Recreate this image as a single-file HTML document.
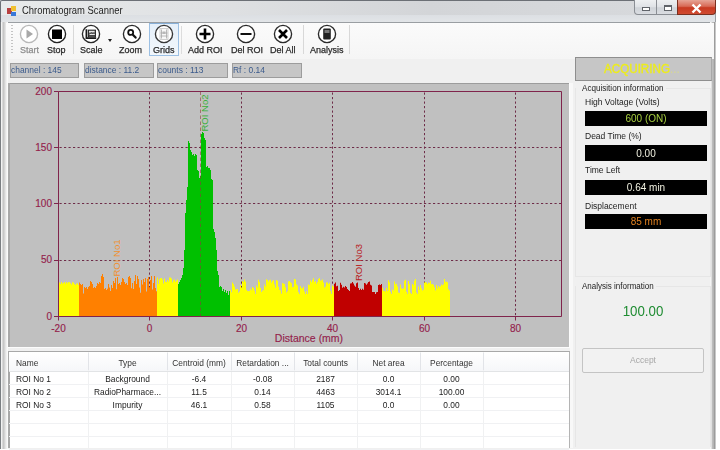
<!DOCTYPE html>
<html><head><meta charset="utf-8"><style>
*{margin:0;padding:0;box-sizing:border-box}
html,body{width:720px;height:450px;overflow:hidden;background:#fff}
#w{position:absolute;left:0;top:0;width:720px;height:450px;filter:blur(0.35px)}
body{position:relative;font-family:"Liberation Sans",sans-serif;color:#222}
.abs{position:absolute}
.t{position:absolute;white-space:nowrap;line-height:1}
</style></head><body><div id="w">
<!-- window frame -->
<div class="abs" style="left:0;top:0;width:716px;height:449px;background:linear-gradient(90deg,#e8eaeb 0%,#dfe1e3 30%,#d3d5d8 60%,#d8dadd 100%);border:1px solid #6c7076;border-bottom:none;border-right-color:#9a9ea2;border-radius:2px 2px 0 0"></div>
<div class="abs" style="left:716px;top:0;width:4px;height:450px;background:#fff"></div>
<div class="abs" style="left:1px;top:15px;width:714px;height:7px;background:linear-gradient(180deg,#dcdfe3,#e2e5e8)"></div>
<!-- icon -->
<div class="abs" style="left:7px;top:8px;width:5px;height:6px;background:#b84040"></div>
<div class="abs" style="left:11px;top:6px;width:5px;height:5px;background:#f0c030"></div>
<div class="abs" style="left:11px;top:12px;width:5px;height:4px;background:#3a78d8"></div>
<div class="t" style="left:22px;top:5.3px;font-size:10.6px;color:#1e1e1e;transform:scaleX(0.89);transform-origin:0 0">Chromatogram Scanner</div>
<!-- caption buttons -->
<div class="abs" style="left:634px;top:0;width:44px;height:15px;border:1px solid #8a8e94;border-top:none;border-radius:0 0 0 4px;background:linear-gradient(180deg,#eef0f2,#dfe2e6 50%,#cfd3d8 55%,#dadde2)"></div>
<div class="abs" style="left:656px;top:0;width:1px;height:14px;background:#8a8e94"></div>
<div class="abs" style="left:642px;top:7px;width:8px;height:4px;background:#fff;border:1px solid #60646a"></div>
<div class="abs" style="left:664px;top:5px;width:8px;height:6px;background:#fff;border:1px solid #60646a;border-top-width:2px"></div>
<div class="abs" style="left:677px;top:0;width:39px;height:15px;border:1px solid #7a3020;border-top:none;border-radius:0 0 4px 0;background:linear-gradient(180deg,#e6a496,#d86a56 45%,#c83a22 55%,#d04a30)"></div>
<svg class="abs" style="left:691px;top:3px" width="11" height="11" viewBox="0 0 11 11"><path d="M1.5 1.5L9.5 9.5M9.5 1.5L1.5 9.5" stroke="#fff" stroke-width="2.4"/></svg>
<!-- client -->
<div class="abs" style="left:5px;top:22px;width:710px;height:427px;background:#f0f0f0;border-top:1px solid #9a9ea2"></div>
<div class="abs" style="left:0;top:22px;width:8px;height:427px;background:linear-gradient(90deg,#7a7e82 0 1px,#f2f2f2 1px 2px,#d8d8d8 2px 3px,#c6c6c6 3px 4px,#d4d4d4 4px 5px,#e4e4e4 5px 6px,#f0f0f0 6px 7px,#fafafa 7px 8px)"></div>
<div class="abs" style="left:710px;top:22px;width:6px;height:427px;background:linear-gradient(90deg,#f4f4f4 0 1px,#e0e0e0 1px 2px,#bcbcbc 2px 3px,#b4b4b4 3px 4px,#9c9c9c 4px 5px,#c8c8c8 5px 6px)"></div><div class="abs" style="left:0;top:449px;width:720px;height:1px;background:#fff"></div>
<!-- toolbar -->
<div class="abs" style="left:6px;top:23px;width:708px;height:36px;background:linear-gradient(180deg,#fbfbfb,#f5f5f5)"></div>
<div class="abs" style="left:11px;top:25px;width:2px;height:28px;background:repeating-linear-gradient(180deg,#c4c4c4 0 1px,transparent 1px 3px)"></div>
<div class="abs" style="left:73px;top:25px;width:1px;height:29px;background:#d8d8d8"></div>
<div class="abs" style="left:181px;top:26px;width:1px;height:28px;background:#dcdcdc"></div>
<div class="abs" style="left:303px;top:25px;width:1px;height:29px;background:#d8d8d8"></div>
<div class="abs" style="left:349px;top:25px;width:1px;height:29px;background:#d8d8d8"></div>
<div class="abs" style="left:149px;top:23px;width:30px;height:33px;background:linear-gradient(180deg,#e6f0fa,#f2f7fc);border:1px solid #9cc0e4;border-top-color:#88b0d8"></div>
<svg class="abs" style="left:18px;top:23px" width="22" height="22" viewBox="-11 -11 22 22">
<circle r="8.6" fill="#fff" stroke="#b8b8b8" stroke-width="1.35"/><path d="M-2.5 -4.5L4 0L-2.5 4.5Z" fill="#a8a8a8"/></svg><svg class="abs" style="left:46px;top:23px" width="22" height="22" viewBox="-11 -11 22 22">
<circle r="8.6" fill="#fff" stroke="#222" stroke-width="1.35"/><rect x="-5" y="-4.5" width="10" height="9.5" fill="#000"/></svg><svg class="abs" style="left:79.5px;top:23px" width="22" height="22" viewBox="-11 -11 22 22">
<circle r="8.6" fill="#fff" stroke="#2a2a2a" stroke-width="1.35"/><path d="M-4.6 -4.8V4.2H5.2" fill="none" stroke="#1a1a1a" stroke-width="1.7"/><rect x="-2.6" y="-3.8" width="7" height="6.6" fill="#e8e8e8" stroke="#222" stroke-width="1.1"/><path d="M-2.2 -0.8H4M-2.2 1.6H4" stroke="#333" stroke-width="1"/><path d="M-2 0.5L0.5 -1.5L2 -0.5L4 -2.5" fill="none" stroke="#444" stroke-width="0.9"/></svg><svg class="abs" style="left:120.5px;top:23.200000000000003px" width="22" height="22" viewBox="-11 -11 22 22">
<circle r="8.6" fill="#fff" stroke="#2a2a2a" stroke-width="1.35"/><circle cx="-1.3" cy="-1.6" r="2.5" fill="none" stroke="#111" stroke-width="1.8"/><path d="M0.6 0.5L3.6 3.6" stroke="#111" stroke-width="2.2" stroke-linecap="round"/></svg><svg class="abs" style="left:152.5px;top:23.200000000000003px" width="22" height="22" viewBox="-11 -11 22 22">
<circle r="8.6" fill="#fff" stroke="#383838" stroke-width="1.35"/><rect x="-4" y="-5.5" width="8" height="11" fill="#f8f8f8" stroke="#c4c4c4" stroke-width="0.8"/><path d="M-2.5 -4.5V4.5M2.5 -4.5V4.5M-3.5 -1H3.5M-3.5 2H3.5" stroke="#a8a8a8" stroke-width="0.8" fill="none"/><rect x="-1.5" y="-2.5" width="3" height="2.5" fill="#b8b8b8"/></svg><svg class="abs" style="left:193.5px;top:23.299999999999997px" width="22" height="22" viewBox="-11 -11 22 22">
<circle r="8.6" fill="#fff" stroke="#2a2a2a" stroke-width="1.35"/><path d="M-5.5 0H5.5M0 -5.5V5.5" stroke="#000" stroke-width="2.6"/></svg><svg class="abs" style="left:235.3px;top:23.299999999999997px" width="22" height="22" viewBox="-11 -11 22 22">
<circle r="8.6" fill="#fff" stroke="#2a2a2a" stroke-width="1.35"/><path d="M-5.5 0H5.5" stroke="#111" stroke-width="2"/></svg><svg class="abs" style="left:272.4px;top:23.299999999999997px" width="22" height="22" viewBox="-11 -11 22 22">
<circle r="8.6" fill="#fff" stroke="#2a2a2a" stroke-width="1.35"/><path d="M-4 -4L4 4M4 -4L-4 4" stroke="#000" stroke-width="2.6"/></svg><svg class="abs" style="left:316.3px;top:23.299999999999997px" width="22" height="22" viewBox="-11 -11 22 22">
<circle r="8.6" fill="#fff" stroke="#2a2a2a" stroke-width="1.35"/><rect x="-3.8" y="-5.5" width="7.6" height="11" rx="1" fill="#222"/><rect x="-2.5" y="-4" width="5" height="3" fill="#777"/></svg>
<div class="abs" style="left:108px;top:39px;width:0;height:0;border-left:2.5px solid transparent;border-right:2.5px solid transparent;border-top:3px solid #222"></div>
<div class="t" style="left:20px;top:45.8px;font-size:9px;color:#8c8c8c;-webkit-text-stroke:0.25px #8c8c8c">Start</div>
<div class="t" style="left:47px;top:45.8px;font-size:9px;color:#2a2a2a;-webkit-text-stroke:0.25px #2a2a2a">Stop</div>
<div class="t" style="left:80px;top:45.8px;font-size:9px;color:#2a2a2a;-webkit-text-stroke:0.25px #2a2a2a">Scale</div>
<div class="t" style="left:119px;top:45.8px;font-size:9px;color:#2a2a2a;-webkit-text-stroke:0.25px #2a2a2a">Zoom</div>
<div class="t" style="left:153px;top:45.8px;font-size:9px;color:#2a2a2a;-webkit-text-stroke:0.25px #2a2a2a">Grids</div>
<div class="t" style="left:188px;top:45.8px;font-size:9px;color:#2a2a2a;-webkit-text-stroke:0.25px #2a2a2a">Add ROI</div>
<div class="t" style="left:231px;top:45.8px;font-size:9px;color:#2a2a2a;-webkit-text-stroke:0.25px #2a2a2a">Del ROI</div>
<div class="t" style="left:270px;top:45.8px;font-size:9px;color:#2a2a2a;-webkit-text-stroke:0.25px #2a2a2a">Del All</div>
<div class="t" style="left:310px;top:45.8px;font-size:9px;color:#2a2a2a;-webkit-text-stroke:0.25px #2a2a2a">Analysis</div>
<!-- status labels -->
<div class="abs" style="left:10px;top:63px;width:69px;height:15px;background:#c6c6c6;border:1px solid #9c9c9c"></div>
<div class="abs" style="left:84px;top:63px;width:70px;height:15px;background:#c6c6c6;border:1px solid #9c9c9c"></div>
<div class="abs" style="left:157px;top:63px;width:71px;height:15px;background:#c6c6c6;border:1px solid #9c9c9c"></div>
<div class="abs" style="left:232px;top:63px;width:70px;height:15px;background:#c6c6c6;border:1px solid #9c9c9c"></div>
<div class="t" style="left:11px;top:64.8px;font-size:9.4px;color:#3a5a8c;transform:scaleX(0.9);transform-origin:0 0">channel : 145</div>
<div class="t" style="left:85px;top:64.8px;font-size:9.4px;color:#3a5a8c;transform:scaleX(0.9);transform-origin:0 0">distance : 11.2</div>
<div class="t" style="left:158px;top:64.8px;font-size:9.4px;color:#3a5a8c;transform:scaleX(0.9);transform-origin:0 0">counts : 113</div>
<div class="t" style="left:233px;top:64.8px;font-size:9.4px;color:#3a5a8c;transform:scaleX(0.9);transform-origin:0 0">Rf : 0.14</div>
<svg class="abs" style="left:0;top:0" width="720" height="450" viewBox="0 0 720 450">
<rect x="8" y="83" width="561" height="264" fill="#c0c0c0"/>
<rect x="8" y="83" width="561" height="1" fill="#9c9c9c"/>
<rect x="8" y="83" width="2" height="264" fill="#a8a8a8"/>
<rect x="8" y="347" width="562" height="1" fill="#fcfcfc"/>
<rect x="569" y="83" width="1" height="265" fill="#fcfcfc"/>
<line x1="59.5" y1="260.5" x2="561.5" y2="260.5" stroke="#6e2c48" stroke-width="1" stroke-dasharray="2.2 2.3"/><line x1="59.5" y1="203.5" x2="561.5" y2="203.5" stroke="#6e2c48" stroke-width="1" stroke-dasharray="2.2 2.3"/><line x1="59.5" y1="147.5" x2="561.5" y2="147.5" stroke="#6e2c48" stroke-width="1" stroke-dasharray="2.2 2.3"/><line x1="149.5" y1="92.5" x2="149.5" y2="316.0" stroke="#6e2c48" stroke-width="1" stroke-dasharray="2.2 2.3"/><line x1="241.5" y1="92.5" x2="241.5" y2="316.0" stroke="#6e2c48" stroke-width="1" stroke-dasharray="2.2 2.3"/><line x1="332.5" y1="92.5" x2="332.5" y2="316.0" stroke="#6e2c48" stroke-width="1" stroke-dasharray="2.2 2.3"/><line x1="424.5" y1="92.5" x2="424.5" y2="316.0" stroke="#6e2c48" stroke-width="1" stroke-dasharray="2.2 2.3"/><line x1="515.5" y1="92.5" x2="515.5" y2="316.0" stroke="#6e2c48" stroke-width="1" stroke-dasharray="2.2 2.3"/>
<path fill="#ffff00" d="M58 316.0V282.9H59V316.0ZM59 316.0V282.4H60V316.0ZM60 316.0V284.0H61V316.0ZM61 316.0V282.1H62V316.0ZM62 316.0V283.6H63V316.0ZM63 316.0V283.1H64V316.0ZM64 316.0V282.1H65V316.0ZM65 316.0V283.5H66V316.0ZM66 316.0V282.0H67V316.0ZM67 316.0V283.3H68V316.0ZM68 316.0V282.1H69V316.0ZM69 316.0V282.2H70V316.0ZM70 316.0V283.3H71V316.0ZM71 316.0V284.5H72V316.0ZM72 316.0V282.3H73V316.0ZM73 316.0V282.6H74V316.0ZM74 316.0V283.9H75V316.0ZM75 316.0V284.9H76V316.0ZM76 316.0V283.7H77V316.0ZM77 316.0V283.2H78V316.0ZM78 316.0V285.0H79V316.0ZM157 316.0V277.4H158V316.0ZM158 316.0V283.9H159V316.0ZM159 316.0V279.3H160V316.0ZM160 316.0V278.2H161V316.0ZM161 316.0V277.9H162V316.0ZM162 316.0V279.5H163V316.0ZM163 316.0V283.5H164V316.0ZM164 316.0V278.4H165V316.0ZM165 316.0V281.7H166V316.0ZM166 316.0V282.1H167V316.0ZM167 316.0V280.0H168V316.0ZM168 316.0V281.4H169V316.0ZM169 316.0V277.5H170V316.0ZM170 316.0V277.5H171V316.0ZM171 316.0V278.6H172V316.0ZM172 316.0V282.4H173V316.0ZM173 316.0V280.4H174V316.0ZM174 316.0V279.5H175V316.0ZM175 316.0V281.7H176V316.0ZM176 316.0V280.6H177V316.0ZM177 316.0V279.4H178V316.0ZM230 316.0V290.1H231V316.0ZM231 316.0V292.3H232V316.0ZM232 316.0V282.4H233V316.0ZM233 316.0V283.9H234V316.0ZM234 316.0V286.4H235V316.0ZM235 316.0V289.6H236V316.0ZM236 316.0V289.2H237V316.0ZM237 316.0V288.9H238V316.0ZM238 316.0V292.7H239V316.0ZM239 316.0V291.4H240V316.0ZM240 316.0V284.9H241V316.0ZM241 316.0V287.4H242V316.0ZM242 316.0V281.1H243V316.0ZM243 316.0V282.1H244V316.0ZM244 316.0V279.5H245V316.0ZM245 316.0V281.6H246V316.0ZM246 316.0V289.7H247V316.0ZM247 316.0V291.1H248V316.0ZM248 316.0V291.3H249V316.0ZM249 316.0V291.1H250V316.0ZM250 316.0V288.7H251V316.0ZM251 316.0V290.3H252V316.0ZM252 316.0V287.1H253V316.0ZM253 316.0V287.9H254V316.0ZM254 316.0V290.8H255V316.0ZM255 316.0V294.0H256V316.0ZM256 316.0V285.6H257V316.0ZM257 316.0V287.6H258V316.0ZM258 316.0V279.8H259V316.0ZM259 316.0V282.1H260V316.0ZM260 316.0V288.1H261V316.0ZM261 316.0V292.0H262V316.0ZM262 316.0V290.5H263V316.0ZM263 316.0V290.2H264V316.0ZM264 316.0V284.4H265V316.0ZM265 316.0V286.4H266V316.0ZM266 316.0V279.3H267V316.0ZM267 316.0V280.1H268V316.0ZM268 316.0V281.4H269V316.0ZM269 316.0V280.1H270V316.0ZM270 316.0V279.8H271V316.0ZM271 316.0V282.4H272V316.0ZM272 316.0V280.8H273V316.0ZM273 316.0V280.3H274V316.0ZM274 316.0V284.5H275V316.0ZM275 316.0V287.7H276V316.0ZM276 316.0V280.1H277V316.0ZM277 316.0V280.8H278V316.0ZM278 316.0V286.7H279V316.0ZM279 316.0V290.0H280V316.0ZM280 316.0V290.5H281V316.0ZM281 316.0V293.7H282V316.0ZM282 316.0V282.9H283V316.0ZM283 316.0V283.4H284V316.0ZM284 316.0V284.0H285V316.0ZM285 316.0V287.3H286V316.0ZM286 316.0V292.4H287V316.0ZM287 316.0V291.3H288V316.0ZM288 316.0V281.5H289V316.0ZM289 316.0V280.9H290V316.0ZM290 316.0V282.3H291V316.0ZM291 316.0V283.2H292V316.0ZM292 316.0V287.2H293V316.0ZM293 316.0V286.8H294V316.0ZM294 316.0V279.1H295V316.0ZM295 316.0V279.6H296V316.0ZM296 316.0V284.2H297V316.0ZM297 316.0V285.6H298V316.0ZM298 316.0V292.3H299V316.0ZM299 316.0V294.0H300V316.0ZM300 316.0V286.2H301V316.0ZM301 316.0V287.9H302V316.0ZM302 316.0V288.5H303V316.0ZM303 316.0V286.8H304V316.0ZM304 316.0V291.6H305V316.0ZM305 316.0V294.0H306V316.0ZM306 316.0V291.2H307V316.0ZM307 316.0V294.0H308V316.0ZM308 316.0V284.5H309V316.0ZM309 316.0V284.9H310V316.0ZM310 316.0V280.4H311V316.0ZM311 316.0V282.3H312V316.0ZM312 316.0V279.9H313V316.0ZM313 316.0V278.3H314V316.0ZM314 316.0V281.9H315V316.0ZM315 316.0V280.9H316V316.0ZM316 316.0V283.8H317V316.0ZM317 316.0V282.1H318V316.0ZM318 316.0V279.0H319V316.0ZM319 316.0V277.9H320V316.0ZM320 316.0V280.4H321V316.0ZM321 316.0V280.6H322V316.0ZM322 316.0V279.4H323V316.0ZM323 316.0V282.6H324V316.0ZM324 316.0V287.6H325V316.0ZM325 316.0V286.5H326V316.0ZM326 316.0V282.5H327V316.0ZM327 316.0V282.6H328V316.0ZM328 316.0V284.1H329V316.0ZM329 316.0V282.8H330V316.0ZM330 316.0V290.9H331V316.0ZM331 316.0V294.0H332V316.0ZM332 316.0V285.5H333V316.0ZM333 316.0V286.4H334V316.0ZM382 316.0V287.7H383V316.0ZM383 316.0V291.1H384V316.0ZM384 316.0V290.8H385V316.0ZM385 316.0V291.6H386V316.0ZM386 316.0V288.1H387V316.0ZM387 316.0V290.9H388V316.0ZM388 316.0V280.2H389V316.0ZM389 316.0V282.2H390V316.0ZM390 316.0V291.7H391V316.0ZM391 316.0V294.0H392V316.0ZM392 316.0V289.5H393V316.0ZM393 316.0V290.4H394V316.0ZM394 316.0V281.5H395V316.0ZM395 316.0V284.2H396V316.0ZM396 316.0V283.7H397V316.0ZM397 316.0V286.5H398V316.0ZM398 316.0V292.6H399V316.0ZM399 316.0V293.0H400V316.0ZM400 316.0V284.6H401V316.0ZM401 316.0V288.3H402V316.0ZM402 316.0V289.1H403V316.0ZM403 316.0V288.2H404V316.0ZM404 316.0V280.8H405V316.0ZM405 316.0V279.7H406V316.0ZM406 316.0V291.7H407V316.0ZM407 316.0V294.0H408V316.0ZM408 316.0V281.0H409V316.0ZM409 316.0V284.0H410V316.0ZM410 316.0V292.7H411V316.0ZM411 316.0V294.0H412V316.0ZM412 316.0V283.9H413V316.0ZM413 316.0V285.2H414V316.0ZM414 316.0V280.8H415V316.0ZM415 316.0V278.9H416V316.0ZM416 316.0V292.6H417V316.0ZM417 316.0V294.0H418V316.0ZM418 316.0V286.4H419V316.0ZM419 316.0V290.0H420V316.0ZM420 316.0V285.1H421V316.0ZM421 316.0V288.3H422V316.0ZM422 316.0V290.6H423V316.0ZM423 316.0V289.8H424V316.0ZM424 316.0V282.5H425V316.0ZM425 316.0V282.3H426V316.0ZM426 316.0V282.4H427V316.0ZM427 316.0V283.9H428V316.0ZM428 316.0V282.6H429V316.0ZM429 316.0V283.1H430V316.0ZM430 316.0V280.8H431V316.0ZM431 316.0V284.3H432V316.0ZM432 316.0V284.0H433V316.0ZM433 316.0V284.7H434V316.0ZM434 316.0V287.2H435V316.0ZM435 316.0V290.6H436V316.0ZM436 316.0V284.9H437V316.0ZM437 316.0V288.4H438V316.0ZM438 316.0V286.0H439V316.0ZM439 316.0V287.2H440V316.0ZM440 316.0V286.3H441V316.0ZM441 316.0V284.4H442V316.0ZM442 316.0V285.2H443V316.0ZM443 316.0V284.3H444V316.0ZM444 316.0V279.1H445V316.0ZM445 316.0V281.9H446V316.0ZM446 316.0V281.4H447V316.0ZM447 316.0V282.3H448V316.0ZM448 316.0V289.2H449V316.0ZM449 316.0V290.5H450V316.0Z"/><path fill="#ff8000" d="M79 316.0V282.5H80V316.0ZM80 316.0V284.0H81V316.0ZM81 316.0V285.0H82V316.0ZM82 316.0V284.0H83V316.0ZM83 316.0V293.4H84V316.0ZM84 316.0V287.0H85V316.0ZM85 316.0V288.0H86V316.0ZM86 316.0V287.0H87V316.0ZM87 316.0V289.0H88V316.0ZM88 316.0V287.0H89V316.0ZM89 316.0V286.0H90V316.0ZM90 316.0V281.0H91V316.0ZM91 316.0V282.0H92V316.0ZM92 316.0V284.0H93V316.0ZM93 316.0V288.0H94V316.0ZM94 316.0V287.0H95V316.0ZM95 316.0V288.0H96V316.0ZM96 316.0V286.0H97V316.0ZM97 316.0V283.0H98V316.0ZM98 316.0V284.0H99V316.0ZM99 316.0V282.0H100V316.0ZM100 316.0V283.0H101V316.0ZM101 316.0V276.0H102V316.0ZM102 316.0V274.0H103V316.0ZM103 316.0V277.0H104V316.0ZM104 316.0V289.0H105V316.0ZM105 316.0V288.0H106V316.0ZM106 316.0V290.0H107V316.0ZM107 316.0V288.7H108V316.0ZM108 316.0V284.0H109V316.0ZM109 316.0V287.4H110V316.0ZM110 316.0V291.0H111V316.0ZM111 316.0V285.0H112V316.0ZM112 316.0V288.0H113V316.0ZM113 316.0V281.0H114V316.0ZM114 316.0V283.0H115V316.0ZM115 316.0V278.0H116V316.0ZM116 316.0V289.3H117V316.0ZM117 316.0V277.0H118V316.0ZM118 316.0V284.0H119V316.0ZM119 316.0V283.0H120V316.0ZM120 316.0V285.0H121V316.0ZM121 316.0V282.0H122V316.0ZM122 316.0V278.0H123V316.0ZM123 316.0V279.0H124V316.0ZM124 316.0V282.0H125V316.0ZM125 316.0V284.0H126V316.0ZM126 316.0V283.0H127V316.0ZM127 316.0V285.0H128V316.0ZM128 316.0V277.0H129V316.0ZM129 316.0V276.0H130V316.0ZM130 316.0V278.0H131V316.0ZM131 316.0V288.3H132V316.0ZM132 316.0V283.0H133V316.0ZM133 316.0V289.0H134V316.0ZM134 316.0V281.0H135V316.0ZM135 316.0V275.0H136V316.0ZM136 316.0V283.9H137V316.0ZM137 316.0V276.0H138V316.0ZM138 316.0V279.0H139V316.0ZM139 316.0V287.6H140V316.0ZM140 316.0V292.7H141V316.0ZM141 316.0V280.0H142V316.0ZM142 316.0V284.5H143V316.0ZM143 316.0V279.0H144V316.0ZM144 316.0V282.0H145V316.0ZM145 316.0V278.0H146V316.0ZM146 316.0V291.5H147V316.0ZM147 316.0V279.0H148V316.0ZM148 316.0V277.0H149V316.0ZM149 316.0V287.3H150V316.0ZM150 316.0V280.0H151V316.0ZM151 316.0V276.0H152V316.0ZM152 316.0V289.6H153V316.0ZM153 316.0V283.0H154V316.0ZM154 316.0V276.0H155V316.0ZM155 316.0V288.1H156V316.0ZM156 316.0V291.2H157V316.0Z"/><path fill="#00c000" d="M178 316.0V284.0H179V316.0ZM179 316.0V282.0H180V316.0ZM180 316.0V280.0H181V316.0ZM181 316.0V278.0H182V316.0ZM182 316.0V275.0H183V316.0ZM183 316.0V268.0H184V316.0ZM184 316.0V250.0H185V316.0ZM185 316.0V213.0H186V316.0ZM186 316.0V200.0H187V316.0ZM187 316.0V187.0H188V316.0ZM188 316.0V141.0H189V316.0ZM189 316.0V143.0H190V316.0ZM190 316.0V150.0H191V316.0ZM191 316.0V152.0H192V316.0ZM192 316.0V155.0H193V316.0ZM193 316.0V154.0H194V316.0ZM194 316.0V156.0H195V316.0ZM195 316.0V154.0H196V316.0ZM196 316.0V155.0H197V316.0ZM197 316.0V170.0H198V316.0ZM198 316.0V171.0H199V316.0ZM199 316.0V178.0H200V316.0ZM200 316.0V176.0H201V316.0ZM201 316.0V134.0H202V316.0ZM202 316.0V132.0H203V316.0ZM203 316.0V133.0H204V316.0ZM204 316.0V138.0H205V316.0ZM205 316.0V140.0H206V316.0ZM206 316.0V167.0H207V316.0ZM207 316.0V166.0H208V316.0ZM208 316.0V168.0H209V316.0ZM209 316.0V168.0H210V316.0ZM210 316.0V170.0H211V316.0ZM211 316.0V179.0H212V316.0ZM212 316.0V180.0H213V316.0ZM213 316.0V229.0H214V316.0ZM214 316.0V232.0H215V316.0ZM215 316.0V238.0H216V316.0ZM216 316.0V250.0H217V316.0ZM217 316.0V271.0H218V316.0ZM218 316.0V275.0H219V316.0ZM219 316.0V287.0H220V316.0ZM220 316.0V286.0H221V316.0ZM221 316.0V287.0H222V316.0ZM222 316.0V291.0H223V316.0ZM223 316.0V289.0H224V316.0ZM224 316.0V292.0H225V316.0ZM225 316.0V290.0H226V316.0ZM226 316.0V293.0H227V316.0ZM227 316.0V291.0H228V316.0ZM228 316.0V295.0H229V316.0ZM229 316.0V291.0H230V316.0Z"/><path fill="#c00000" d="M334 316.0V283.8H335V316.0ZM335 316.0V282.6H336V316.0ZM336 316.0V286.3H337V316.0ZM337 316.0V285.7H338V316.0ZM338 316.0V291.0H339V316.0ZM339 316.0V290.1H340V316.0ZM340 316.0V282.8H341V316.0ZM341 316.0V284.7H342V316.0ZM342 316.0V287.7H343V316.0ZM343 316.0V286.7H344V316.0ZM344 316.0V287.5H345V316.0ZM345 316.0V286.1H346V316.0ZM346 316.0V287.0H347V316.0ZM347 316.0V288.9H348V316.0ZM348 316.0V289.9H349V316.0ZM349 316.0V290.9H350V316.0ZM350 316.0V283.5H351V316.0ZM351 316.0V283.3H352V316.0ZM352 316.0V282.1H353V316.0ZM353 316.0V283.4H354V316.0ZM354 316.0V285.5H355V316.0ZM355 316.0V286.7H356V316.0ZM356 316.0V283.3H357V316.0ZM357 316.0V282.6H358V316.0ZM358 316.0V288.1H359V316.0ZM359 316.0V290.1H360V316.0ZM360 316.0V288.7H361V316.0ZM361 316.0V290.0H362V316.0ZM362 316.0V288.7H363V316.0ZM363 316.0V289.8H364V316.0ZM364 316.0V283.1H365V316.0ZM365 316.0V283.4H366V316.0ZM366 316.0V284.8H367V316.0ZM367 316.0V283.4H368V316.0ZM368 316.0V282.0H369V316.0ZM369 316.0V281.5H370V316.0ZM370 316.0V284.7H371V316.0ZM371 316.0V285.6H372V316.0ZM372 316.0V291.9H373V316.0ZM373 316.0V292.0H374V316.0ZM374 316.0V292.0H375V316.0ZM375 316.0V293.9H376V316.0ZM376 316.0V292.3H377V316.0ZM377 316.0V292.1H378V316.0ZM378 316.0V285.1H379V316.0ZM379 316.0V284.4H380V316.0ZM380 316.0V284.9H381V316.0ZM381 316.0V284.1H382V316.0Z"/>
<line x1="200.5" y1="91.5" x2="200.5" y2="316.0" stroke="#8a3a3a" stroke-opacity="0.6" stroke-width="1" stroke-dasharray="3.5 2.5"/>
<path d="M58.5 91.5H561.5V316.5H58.5Z" fill="none" stroke="#80244c" stroke-width="1"/>
<line x1="54" y1="316.5" x2="58.5" y2="316.5" stroke="#80244c"/><line x1="54" y1="260.5" x2="58.5" y2="260.5" stroke="#80244c"/><line x1="54" y1="203.5" x2="58.5" y2="203.5" stroke="#80244c"/><line x1="54" y1="147.5" x2="58.5" y2="147.5" stroke="#80244c"/><line x1="54" y1="91.5" x2="58.5" y2="91.5" stroke="#80244c"/><line x1="58.5" y1="316.0" x2="58.5" y2="320.5" stroke="#80244c"/><line x1="149.5" y1="316.0" x2="149.5" y2="320.5" stroke="#80244c"/><line x1="241.5" y1="316.0" x2="241.5" y2="320.5" stroke="#80244c"/><line x1="332.5" y1="316.0" x2="332.5" y2="320.5" stroke="#80244c"/><line x1="424.5" y1="316.0" x2="424.5" y2="320.5" stroke="#80244c"/><line x1="515.5" y1="316.0" x2="515.5" y2="320.5" stroke="#80244c"/>
<g font-family="Liberation Sans" font-size="10" fill="#941e4c" stroke="#941e4c" stroke-width="0.15"><text x="52" y="319.5" text-anchor="end">0</text><text x="52" y="263.4" text-anchor="end">50</text><text x="52" y="207.2" text-anchor="end">100</text><text x="52" y="151.1" text-anchor="end">150</text><text x="52" y="95.0" text-anchor="end">200</text><text x="58.5" y="331.5" text-anchor="middle">-20</text><text x="149.5" y="331.5" text-anchor="middle">0</text><text x="241.5" y="331.5" text-anchor="middle">20</text><text x="332.5" y="331.5" text-anchor="middle">40</text><text x="424.5" y="331.5" text-anchor="middle">60</text><text x="515.5" y="331.5" text-anchor="middle">80</text>
<text x="309" y="342" text-anchor="middle" font-size="10.5">Distance (mm)</text></g>
<g font-family="Liberation Sans" font-size="9.5">
<text transform="translate(120,276.5) rotate(-90)" fill="#f09030">ROI No1</text>
<text transform="translate(207.5,131.5) rotate(-90)" fill="#38b038">ROI No2</text>
<text transform="translate(361.5,281) rotate(-90)" fill="#b82020">ROI No3</text>
</g>
</svg>
<!-- table -->
<div class="abs" style="left:8px;top:351px;width:562px;height:97px;background:#fff;border:1px solid #a8a8a8;border-left:2px solid #a8a8a8;border-right-color:#b4b4b4;border-bottom:none"></div>
<div class="abs" style="left:9px;top:352px;width:560px;height:19px;background:linear-gradient(180deg,#fff,#f6f7f9)"></div>
<div class="abs" style="left:88px;top:352px;width:1px;height:96px;background:#f0f1f2"></div><div class="abs" style="left:88px;top:353px;width:1px;height:17px;background:#e2e4e8"></div><div class="abs" style="left:167px;top:352px;width:1px;height:96px;background:#f0f1f2"></div><div class="abs" style="left:167px;top:353px;width:1px;height:17px;background:#e2e4e8"></div><div class="abs" style="left:231px;top:352px;width:1px;height:96px;background:#f0f1f2"></div><div class="abs" style="left:231px;top:353px;width:1px;height:17px;background:#e2e4e8"></div><div class="abs" style="left:294px;top:352px;width:1px;height:96px;background:#f0f1f2"></div><div class="abs" style="left:294px;top:353px;width:1px;height:17px;background:#e2e4e8"></div><div class="abs" style="left:357px;top:352px;width:1px;height:96px;background:#f0f1f2"></div><div class="abs" style="left:357px;top:353px;width:1px;height:17px;background:#e2e4e8"></div><div class="abs" style="left:420px;top:352px;width:1px;height:96px;background:#f0f1f2"></div><div class="abs" style="left:420px;top:353px;width:1px;height:17px;background:#e2e4e8"></div><div class="abs" style="left:483px;top:352px;width:1px;height:96px;background:#f0f1f2"></div><div class="abs" style="left:483px;top:353px;width:1px;height:17px;background:#e2e4e8"></div><div class="abs" style="left:9px;top:371px;width:560px;height:1px;background:#e2e4e6"></div><div class="abs" style="left:9px;top:384px;width:560px;height:1px;background:#f0f1f3"></div><div class="abs" style="left:9px;top:397px;width:560px;height:1px;background:#f0f1f3"></div><div class="abs" style="left:9px;top:410px;width:560px;height:1px;background:#f0f1f3"></div><div class="abs" style="left:9px;top:423px;width:560px;height:1px;background:#f0f1f3"></div><div class="abs" style="left:9px;top:436px;width:560px;height:1px;background:#f0f1f3"></div><div class="abs" style="left:9px;top:449px;width:560px;height:1px;background:#f0f1f3"></div><div class="t" style="left:16px;top:358.5px;font-size:8.4px;color:#333">Name</div><div class="t" style="left:88px;top:358.5px;width:79px;text-align:center;font-size:8.4px;color:#333">Type</div><div class="t" style="left:167px;top:358.5px;width:64px;text-align:center;font-size:8.4px;color:#333">Centroid (mm)</div><div class="t" style="left:231px;top:358.5px;width:63px;text-align:center;font-size:8.4px;color:#333">Retardation ...</div><div class="t" style="left:294px;top:358.5px;width:63px;text-align:center;font-size:8.4px;color:#333">Total counts</div><div class="t" style="left:357px;top:358.5px;width:63px;text-align:center;font-size:8.4px;color:#333">Net area</div><div class="t" style="left:420px;top:358.5px;width:63px;text-align:center;font-size:8.4px;color:#333">Percentage</div><div class="t" style="left:16px;top:374.5px;font-size:8.4px;color:#222">ROI No 1</div><div class="t" style="left:88px;top:374.5px;width:79px;text-align:center;font-size:8.4px;color:#222">Background</div><div class="t" style="left:167px;top:374.5px;width:64px;text-align:center;font-size:8.4px;color:#222">-6.4</div><div class="t" style="left:231px;top:374.5px;width:63px;text-align:center;font-size:8.4px;color:#222">-0.08</div><div class="t" style="left:294px;top:374.5px;width:63px;text-align:center;font-size:8.4px;color:#222">2187</div><div class="t" style="left:357px;top:374.5px;width:63px;text-align:center;font-size:8.4px;color:#222">0.0</div><div class="t" style="left:420px;top:374.5px;width:63px;text-align:center;font-size:8.4px;color:#222">0.00</div><div class="t" style="left:16px;top:387.5px;font-size:8.4px;color:#222">ROI No 2</div><div class="t" style="left:88px;top:387.5px;width:79px;text-align:center;font-size:8.4px;color:#222">RadioPharmace...</div><div class="t" style="left:167px;top:387.5px;width:64px;text-align:center;font-size:8.4px;color:#222">11.5</div><div class="t" style="left:231px;top:387.5px;width:63px;text-align:center;font-size:8.4px;color:#222">0.14</div><div class="t" style="left:294px;top:387.5px;width:63px;text-align:center;font-size:8.4px;color:#222">4463</div><div class="t" style="left:357px;top:387.5px;width:63px;text-align:center;font-size:8.4px;color:#222">3014.1</div><div class="t" style="left:420px;top:387.5px;width:63px;text-align:center;font-size:8.4px;color:#222">100.00</div><div class="t" style="left:16px;top:400.5px;font-size:8.4px;color:#222">ROI No 3</div><div class="t" style="left:88px;top:400.5px;width:79px;text-align:center;font-size:8.4px;color:#222">Impurity</div><div class="t" style="left:167px;top:400.5px;width:64px;text-align:center;font-size:8.4px;color:#222">46.1</div><div class="t" style="left:231px;top:400.5px;width:63px;text-align:center;font-size:8.4px;color:#222">0.58</div><div class="t" style="left:294px;top:400.5px;width:63px;text-align:center;font-size:8.4px;color:#222">1105</div><div class="t" style="left:357px;top:400.5px;width:63px;text-align:center;font-size:8.4px;color:#222">0.0</div><div class="t" style="left:420px;top:400.5px;width:63px;text-align:center;font-size:8.4px;color:#222">0.00</div>
<!-- right panel -->
<div class="abs" style="left:575px;top:57px;width:137px;height:24px;background:#c6c6c6;border:1px solid #8e8e8e;border-right-color:#a8a8a8"></div><div class="abs" style="left:570px;top:83px;width:3px;height:365px;background:#f8f8f8"></div>
<div class="t" style="left:604px;top:62.8px;font-size:12px;color:#ecec1c;-webkit-text-stroke:0.35px #ecec1c;transform:scaleX(0.97);transform-origin:0 0">ACQUIRING<span style="color:#d8d890;-webkit-text-stroke:0">...</span></div>
<div class="abs" style="left:575px;top:88px;width:136px;height:189px;border:1px solid #e6e6e6;border-top:none"></div>
<div class="abs" style="left:666px;top:88px;width:45px;height:1px;background:#e6e6e6"></div>
<div class="t" style="left:582px;top:83.5px;font-size:9px;color:#222;transform:scaleX(0.9);transform-origin:0 0">Acquisition information</div>
<div class="t" style="left:585px;top:98px;font-size:8.5px;color:#222">High Voltage (Volts)</div>
<div class="abs" style="left:585px;top:111px;width:122px;height:15px;background:#000"></div>
<div class="t" style="left:585px;top:114px;width:122px;text-align:center;font-size:10px;color:#a8d040">600 (ON)</div>
<div class="t" style="left:585px;top:132px;font-size:8.5px;color:#222">Dead Time (%)</div>
<div class="abs" style="left:585px;top:145px;width:122px;height:16px;background:#000"></div>
<div class="t" style="left:585px;top:148.5px;width:122px;text-align:center;font-size:10px;color:#f0f0e0">0.00</div>
<div class="t" style="left:585px;top:165.5px;font-size:8.5px;color:#222">Time Left</div>
<div class="abs" style="left:585px;top:180px;width:122px;height:15px;background:#000"></div>
<div class="t" style="left:585px;top:183px;width:122px;text-align:center;font-size:10px;color:#f0f0e0">0.64 min</div>
<div class="t" style="left:585px;top:202px;font-size:8.5px;color:#222">Displacement</div>
<div class="abs" style="left:585px;top:214px;width:122px;height:15px;background:#000"></div>
<div class="t" style="left:585px;top:217px;width:122px;text-align:center;font-size:10px;color:#e08020">85 mm</div>
<div class="abs" style="left:575px;top:286px;width:136px;height:161px;border:1px solid #e6e6e6;border-top:none;border-bottom:none"></div>
<div class="abs" style="left:656px;top:286px;width:55px;height:1px;background:#e6e6e6"></div>
<div class="t" style="left:582px;top:281.5px;font-size:9px;color:#222;transform:scaleX(0.89);transform-origin:0 0">Analysis information</div>
<div class="t" style="left:575px;top:304px;width:136px;text-align:center;font-size:14px;color:#1f8c32;transform:scaleX(0.95)">100.00</div>
<div class="abs" style="left:582px;top:348px;width:122px;height:25px;background:#f2f2f2;border:1px solid #c4c4c4;border-radius:2px"></div>
<div class="t" style="left:582px;top:356px;width:122px;text-align:center;font-size:8.5px;color:#a8a8a8">Accept</div>
</div></body></html>
